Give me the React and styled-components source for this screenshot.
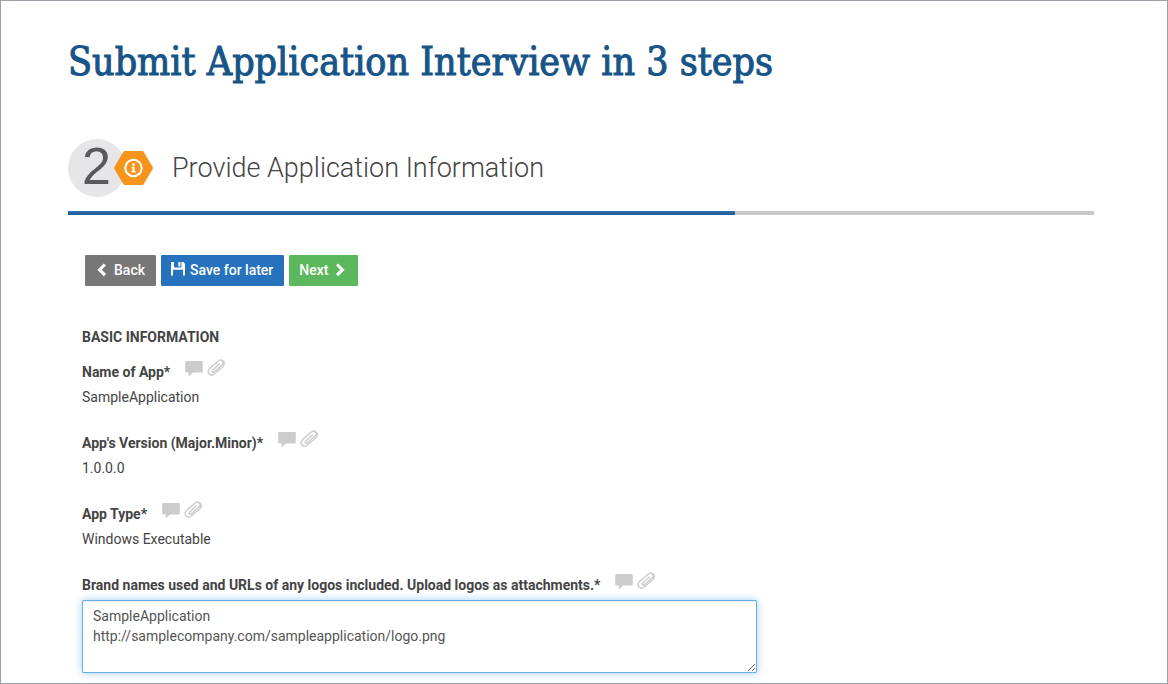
import React, { useId } from "react";
import styled, { createGlobalStyle } from "styled-components";

const GlobalStyle = createGlobalStyle`
  *, *::before, *::after { box-sizing: border-box; }
  body {
    margin: 0;
    background: #fff;
    color: #444;
    font-family: Roboto, "Liberation Sans", sans-serif;
    font-size: 14px;
    line-height: 20px;
  }
`;

const Page = styled.main`
  min-height: 100vh;
  border: 1px solid #9ba1a7;
  padding: 37px 73px 10px 67px;
`;

const PageTitle = styled.h1`
  margin: 0;
  color: #175487;
  font-family: "Roboto Slab", "DejaVu Serif Condensed", "DejaVu Serif", serif;
  font-size: 39px;
  font-weight: 400;
  line-height: 48px;
  -webkit-text-stroke: 1px #175487;
`;

const StepHeader = styled.header`
  display: flex;
  align-items: center;
  gap: 18px;
  margin-top: 53px;
`;

const StepBadge = styled.svg`
  display: block;
  flex: none;
  width: 86px;
  height: 58px;
  overflow: visible;
`;

const StepTitle = styled.h2`
  margin: 0;
  color: #444;
  font-size: 27px;
  font-weight: 300;
  line-height: 36px;
`;

const ProgressTrack = styled.div`
  height: 4px;
  margin-top: 14px;
  background: #c8c8c8;
`;

const ProgressFill = styled.div`
  width: ${(p) => p.$percent}%;
  height: 100%;
  background: linear-gradient(#2b73b3, #235a8c);
`;

const Toolbar = styled.div`
  display: flex;
  gap: 5px;
  margin: 40px 0 0 17px;
`;

const tones = { grey: "#777", blue: "#2672bd", green: "#5cb85c" };

const Button = styled.button`
  display: flex;
  align-items: center;
  gap: 5px;
  height: 31px;
  padding: 0 11px 2px 10px;
  border: 0;
  border-radius: 1px;
  background: ${(p) => tones[p.$tone]};
  color: #fff;
  font: 500 14px/20px Roboto, "Liberation Sans", sans-serif;
  cursor: pointer;
`;

const ButtonIcon = styled.svg`
  flex: none;
  width: 14px;
  height: 14px;
  fill: currentColor;
  overflow: visible;
`;

const Form = styled.form`
  margin: 41px 0 0 14px;
`;

const SectionTitle = styled.h3`
  margin: 0 0 15px;
  font-size: 14px;
  font-weight: 700;
  line-height: 20px;
`;

const Field = styled.div`
  & + & { margin-top: 26px; }
`;

const FieldHead = styled.div`
  display: flex;
  align-items: flex-start;
  gap: 15px;
  height: 25px;
`;

const Label = styled.label`
  font-weight: 700;
`;

const FieldActions = styled.div`
  display: flex;
  gap: 4px;
  margin-top: -3px;
`;

const IconButton = styled.button`
  display: block;
  height: 18px;
  padding: 0;
  border: 0;
  background: none;
  color: #ccc;
  line-height: 0;
  cursor: pointer;

  svg { display: block; width: 18px; height: 18px; }
`;

const Value = styled.output`
  display: block;
`;

const TextArea = styled.textarea`
  display: block;
  width: 100%;
  max-width: 675px;
  height: 73px;
  padding: 5px 10px;
  border: 1px solid #66afe9;
  border-radius: 1px;
  outline: 0;
  box-shadow: inset 0 1px 1px rgba(0, 0, 0, 0.075), 0 0 8px rgba(102, 175, 233, 0.6);
  background: #fff;
  color: #555;
  font: 400 14px/20px Roboto, "Liberation Sans", sans-serif;
  resize: both;
`;

function CommentIcon() {
  return (
    <svg viewBox="0 0 18 18" aria-hidden="true">
      <path
        fill="currentColor"
        d="M1 2H17Q17.8 2 17.8 2.8V12.7Q17.8 13.5 17 13.5H8L3.6 17.6V13.5H1Q.2 13.5 .2 12.7V2.8Q.2 2 1 2Z"
      />
    </svg>
  );
}

function ClipIcon() {
  return (
    <svg viewBox="0 0 18 18" aria-hidden="true">
      <path
        fill="none"
        stroke="currentColor"
        strokeWidth="1.4"
        strokeLinecap="round"
        strokeLinejoin="round"
        d="M12.2 5.1L5.6 11.2C4.4 12.4 5.8 14 7.1 12.9L15 5.9C18 3 14.4-.4 11.3 2L2.7 9.4C-1.2 13.2 3.2 18.2 7.3 15L15.6 8C18.6 5 17.2 1.2 13.8 1.1"
      />
    </svg>
  );
}

function HeadedField({ label, children }) {
  const id = useId();
  return (
    <Field>
      <FieldHead>
        <Label htmlFor={id}>{label}</Label>
        <FieldActions>
          <IconButton type="button" aria-label="Comment"><CommentIcon /></IconButton>
          <IconButton type="button" aria-label="Attach"><ClipIcon /></IconButton>
        </FieldActions>
      </FieldHead>
      {children(id)}
    </Field>
  );
}

const facts = [
  ["Name of App*", "SampleApplication"],
  ["App's Version (Major.Minor)*", "1.0.0.0"],
  ["App Type*", "Windows Executable"],
];

export default function App() {
  return (
    <>
      <GlobalStyle />
      <Page>
        <PageTitle>Submit Application Interview in 3 steps</PageTitle>
        <StepHeader>
          <StepBadge viewBox="0 0 86 58">
            <circle cx="29" cy="29" r="29" fill="#e6e6e8" />
            <text x="14" y="45" fill="#58595b" fontFamily="Liberation Sans, sans-serif" fontSize="52">2</text>
            <path
              d="M57 14H74L83 29L74 44H57L48 29Z"
              fill="#f7941e"
              stroke="#f7941e"
              strokeWidth="4"
              strokeLinejoin="round"
            />
            <circle cx="65.5" cy="29" r="8.2" fill="none" stroke="#fff" strokeWidth="2" />
            <circle cx="65.5" cy="25.6" r="1.3" fill="#fff" />
            <path d="M63.6 27.8H66.6V31.9H67.5V33.4H63.6V31.9H64.4V29.2H63.6Z" fill="#fff" />
          </StepBadge>
          <StepTitle>Provide Application Information</StepTitle>
        </StepHeader>
        <ProgressTrack role="progressbar" aria-label="Interview progress" aria-valuenow={65}>
          <ProgressFill $percent={65} />
        </ProgressTrack>
        <Toolbar>
          <Button type="button" $tone="grey">
            <ButtonIcon viewBox="0 0 14 14">
              <path d="M8.8 .4L11 2.6L6.8 6.8L11 11L8.8 13.2L2.4 6.8Z" />
            </ButtonIcon>
            Back
          </Button>
          <Button type="button" $tone="blue">
            <ButtonIcon viewBox="0 0 14 14">
              <path d="M0 -1H3V4.5H10.4V-1H12.3L14 .8V12.4H12V6.8H2V12.4H0ZM7.4 -1H9.4V3.4H7.4Z" />
            </ButtonIcon>
            Save for later
          </Button>
          <Button type="button" $tone="green">
            Next
            <ButtonIcon viewBox="0 0 14 14">
              <path d="M5.2 .4L3 2.6L7.2 6.8L3 11L5.2 13.2L11.6 6.8Z" />
            </ButtonIcon>
          </Button>
        </Toolbar>
        <Form>
          <SectionTitle>BASIC INFORMATION</SectionTitle>
          {facts.map(([label, value]) => (
            <HeadedField key={label} label={label}>
              {(id) => <Value id={id}>{value}</Value>}
            </HeadedField>
          ))}
          <HeadedField label="Brand names used and URLs of any logos included. Upload logos as attachments.*">
            {(id) => (
              <TextArea
                id={id}
                defaultValue={"SampleApplication\nhttp://samplecompany.com/sampleapplication/logo.png"}
              />
            )}
          </HeadedField>
        </Form>
      </Page>
    </>
  );
}
